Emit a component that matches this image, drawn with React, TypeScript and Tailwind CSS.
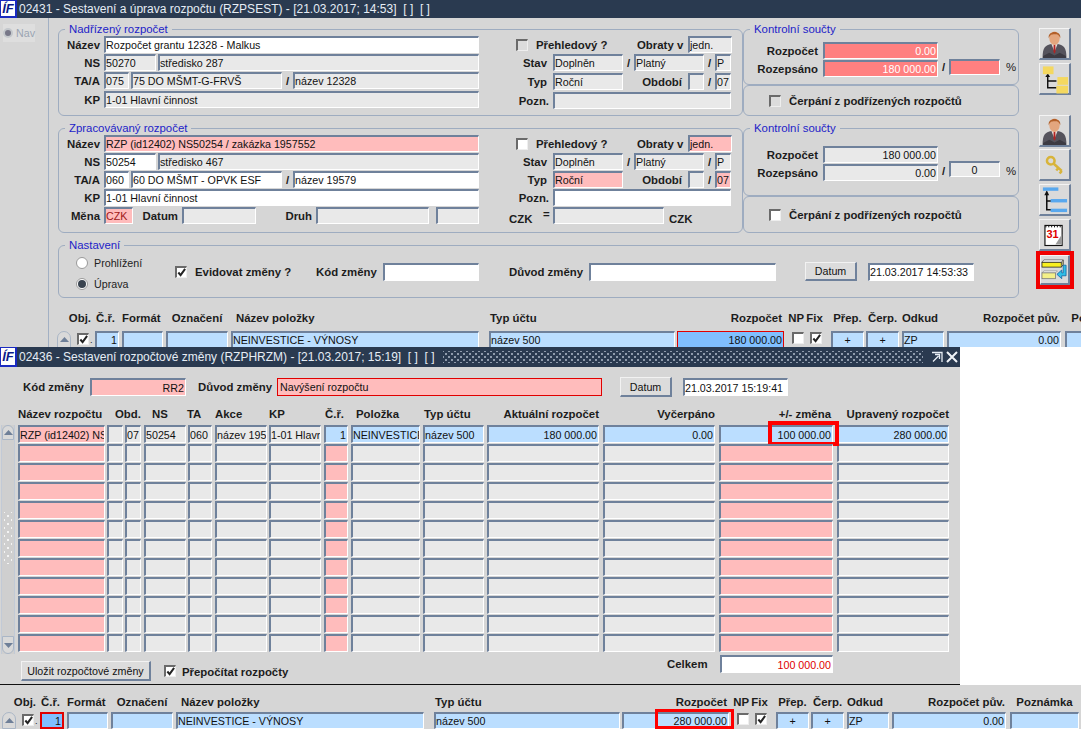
import React from "react";

const field = "shrink-0 flex items-center overflow-hidden whitespace-nowrap pl-0 pr-[1px] text-[10.7px] border-t-2 border-l-2 border-r border-b border-t-[#6f819b] border-l-[#6f819b] border-r-white border-b-white";
const GRAY = "bg-[#e9e9e9]";
const WHITE = "bg-white";
const PINK = "bg-[#ffbcbc]";
const BLUE = "bg-[#bbdeff]";
const DBLUE = "bg-[#80bfff]";
const SALMON = "bg-[#ff8080]";
const RED = "shrink-0 flex items-center overflow-hidden whitespace-nowrap px-[1px] text-[10.7px] border border-[#e00000]";

function F({ c, t, children }: { c: string; t?: string; children?: React.ReactNode }) {
  return <div className={`${field} ${c}`}>{t}{children}</div>;
}
function L({ c, t }: { c: string; t: string }) {
  return <div className={`shrink-0 whitespace-nowrap font-bold text-[#1c1c1c] ${c}`}>{t}</div>;
}
function Slash({ c }: { c: string }) {
  return <div className={`shrink-0 text-center font-bold text-[#1c1c1c] ${c}`}>/</div>;
}
function Check({ on, white, c = "" }: { on?: boolean; white?: boolean; c?: string }) {
  return (
    <div className={`shrink-0 w-[12px] h-[12px] border-t-2 border-l-2 border-t-[#6a6a6a] border-l-[#6a6a6a] border-r border-b border-r-[#eee] border-b-[#eee] ${white ? "bg-white" : "bg-[#dcdcdc]"} ${c}`}>
      {on && (
        <svg viewBox="0 0 10 10" className="w-[9px] h-[9px]">
          <path d="M1.5 5 L4 8 L9 1" fill="none" stroke="#222" strokeWidth="2.2" />
        </svg>
      )}
    </div>
  );
}
function Radio({ on, c = "" }: { on?: boolean; c?: string }) {
  return (
    <div className={`shrink-0 w-[12px] h-[12px] rounded-full bg-white border border-[#9a9a9a] flex items-center justify-center ${c}`}>
      {on && <div className="w-[8px] h-[8px] rounded-full bg-[#3a4450]" />}
    </div>
  );
}
function Box({ title, c, children }: { title?: string; c: string; children?: React.ReactNode }) {
  return (
    <div className={`relative shrink-0 border border-[#9eacc0] rounded-[6px] ${c}`}>
      {title && <div className="absolute -top-[8px] left-[6px] px-[4px] bg-[#d6d6d6] text-[#2222c8] whitespace-nowrap leading-[14px]">{title}</div>}
      {children}
    </div>
  );
}
function Btn({ c, t }: { c: string; t: string }) {
  return (
    <div className={`shrink-0 flex items-center justify-center whitespace-nowrap text-[10.7px] bg-[#dcdcdc] border border-t-[#f2f2f2] border-l-[#f2f2f2] border-r-2 border-b-2 border-r-[#6f819b] border-b-[#6f819b] ${c}`}>
      {t}
    </div>
  );
}
function Arrow({ dir, c = "" }: { dir: "up" | "down"; c?: string }) {
  return (
    <div className={`shrink-0 flex items-center justify-center bg-[#d9d9d9] border border-[#aab6c6] ${dir === "up" ? "rounded-t-[8px]" : "rounded-b-[8px]"} ${c}`}>
      <svg viewBox="0 0 9 5" className="w-[9px] h-[5px]">
        <path d={dir === "up" ? "M0 5 L4.5 0 L9 5Z" : "M0 0 L4.5 5 L9 0Z"} fill="#6e7f98" />
      </svg>
    </div>
  );
}

function Person() {
  return (
    <svg viewBox="0 0 24 27" className="w-[25px] h-[28px]">
      <path d="M0.5 27 C0.5 17 3 14.5 9 13.5 L15 13.5 C21 14.5 23.5 17 23.5 27 Z" fill="#55535c" />
      <path d="M9 13.5 L12 21 L15 13.5 Z" fill="#e6e0dc" />
      <path d="M11.2 14 L12.8 14 L13 21 L12 23 L11 21 Z" fill="#b32222" />
      <ellipse cx="12" cy="8" rx="5" ry="6.5" fill="#e3a67e" />
      <path d="M6.5 8 C5 0 19 0 17.5 8 C16.5 4.5 15 4 12 4 C9 4 7.5 4.5 6.5 8Z" fill="#b2602a" />
      <path d="M1 25 L7 22 L12 24.5 L17 22 L23 25 L23 27 L1 27Z" fill="#3c3a42" />
    </svg>
  );
}
function YellowTree() {
  return (
    <svg viewBox="0 0 30 30" className="w-[30px] h-[30px]">
      <path d="M8 11 V24 H17 M8 17 H17" fill="none" stroke="#111" strokeWidth="1.5" />
      <path d="M8 9 L5.5 13 H10.5Z" fill="#111" />
      <rect x="3" y="2" width="11" height="8" fill="#f4d860" />
      <rect x="18" y="13" width="11" height="8" fill="#f4d860" />
      <rect x="17" y="22" width="12" height="8" fill="#f4d860" />
    </svg>
  );
}
function Key() {
  return (
    <svg viewBox="0 0 26 26" className="w-[22px] h-[22px]">
      <circle cx="8" cy="8" r="4.5" fill="none" stroke="#d8b43a" strokeWidth="3" />
      <path d="M11.5 11.5 L21 20 M17 16.5 L14.5 19.5 M21 20 L18.5 23" fill="none" stroke="#d8b43a" strokeWidth="3" />
    </svg>
  );
}
function BlueTree() {
  return (
    <svg viewBox="0 0 30 28" className="w-[30px] h-[28px]">
      <path d="M7 7 V24 H14 M7 15 H14" fill="none" stroke="#111" strokeWidth="1.6" />
      <path d="M7 4 L4.5 9 H9.5Z" fill="#111" />
      <rect x="3" y="1" width="16" height="3.5" fill="#58a8ee" />
      <rect x="11" y="13" width="17" height="3.5" fill="#58a8ee" />
      <rect x="11" y="23" width="17" height="3.5" fill="#58a8ee" />
    </svg>
  );
}
function Calendar() {
  return (
    <svg viewBox="0 0 22 24" className="w-[21px] h-[24px]">
      <rect x="1" y="2" width="18" height="21" fill="#fff" stroke="#111" strokeWidth="1.2" />
      <path d="M2 1.5 V4 M5 1.5 V4 M8 1.5 V4 M11 1.5 V4 M14 1.5 V4 M17 1.5 V4" stroke="#111" strokeWidth="1" />
      <text x="2.5" y="15.5" fontSize="11.5" fontWeight="700" fontFamily="Liberation Sans" fill="#e00000">31</text>
      <path d="M19 11 L12 22 L19 22Z" fill="#9a9a9a" />
    </svg>
  );
}
function Stack() {
  return (
    <svg viewBox="0 0 28 24" className="w-[28px] h-[24px]">
      <path d="M1 4 L3 1.5 H23 L21 4 Z" fill="#fff" stroke="#333" strokeWidth="0.6" />
      <rect x="1" y="4" width="20" height="5" fill="#f8f020" stroke="#222" strokeWidth="0.8" />
      <path d="M21 9 L23 6.5 V1.5" fill="#d8d070" stroke="#222" strokeWidth="0.8" />
      <path d="M1 15 L3 13 H17 L15 15 Z" fill="#fff" stroke="#777" strokeWidth="0.6" />
      <rect x="1" y="15" width="14" height="6" fill="#f4f088" stroke="#777" strokeWidth="0.8" />
      <path d="M23 7 H26 V18 H21.5 V21 L16.5 16.5 L21.5 12 V15 H23Z" fill="#30c0e8" stroke="#1060a0" strokeWidth="0.8" />
    </svg>
  );
}
function Tool({ children, c = "w-[32px] h-[32px]" }: { children: React.ReactNode; c?: string }) {
  return (
    <div className={`shrink-0 flex items-center justify-center bg-[#dadada] border border-t-[#f4f4f4] border-l-[#f4f4f4] border-r-2 border-b-2 border-r-[#6f819b] border-b-[#6f819b] ${c}`}>
      {children}
    </div>
  );
}
function Logo() {
  return (
    <div className="shrink-0 w-[17px] h-full bg-white border-r-2 border-b-2 border-t border-l border-[#1a2ac0] flex items-center justify-center overflow-hidden">
      <span className="font-bold italic text-[13px] leading-none text-[#0c1a8a]">ÍF</span>
    </div>
  );
}

function Parent() {
  return (
    <Box title="Nadřízený rozpočet" c="w-[685px] h-[87px] flex">
      <div className="w-[421px] pt-[6px] flex flex-col gap-[1px]">
        <div className="flex h-[17px] items-center"><L c="w-[41px] text-right mr-[4px]" t="Název" /><F c={`${WHITE} w-[375px] h-[17px]`} t="Rozpočet grantu 12328 - Malkus" /></div>
        <div className="flex h-[17px] items-center"><L c="w-[41px] text-right mr-[4px]" t="NS" /><F c={`${GRAY} w-[52px] h-[17px]`} t="50270" /><F c={`${GRAY} w-[321px] h-[17px] ml-[2px]`} t="středisko 287" /></div>
        <div className="flex h-[17px] items-center"><L c="w-[41px] text-right mr-[4px]" t="TA/A" /><F c={`${GRAY} w-[25px] h-[17px]`} t="075" /><F c={`${GRAY} w-[151px] h-[17px] ml-[2px]`} t="75 DO MŠMT-G-FRVŠ" /><Slash c="w-[11px]" /><F c={`${GRAY} w-[186px] h-[17px]`} t="název 12328" /></div>
        <div className="flex h-[17px] items-center mt-[1px]"><L c="w-[41px] text-right mr-[4px]" t="KP" /><F c={`${GRAY} w-[375px] h-[17px]`} t="1-01 Hlavní činnost" /></div>
      </div>
      <div className="pt-[6px] flex flex-col gap-[1px]">
        <div className="flex h-[17px] items-center"><Check c="ml-[36px]" /><L c="w-[109px] pl-[8px]" t="Přehledový ?" /><L c="w-[45px]" t="Obraty v" /><F c={`${GRAY} w-[44px] h-[17px] ml-[6px]`} t="jedn." /></div>
        <div className="flex h-[17px] items-center"><L c="w-[67px] text-right mr-[6px]" t="Stav" /><F c={`${GRAY} w-[70px] h-[17px]`} t="Doplněn" /><Slash c="w-[11px]" /><F c={`${GRAY} w-[70px] h-[17px]`} t="Platný" /><Slash c="w-[11px]" /><F c={`${GRAY} w-[16px] h-[17px]`} t="P" /></div>
        <div className="flex h-[17px] items-center mt-[1px]"><L c="w-[67px] text-right mr-[6px]" t="Typ" /><F c={`${GRAY} w-[70px] h-[17px]`} t="Roční" /><L c="w-[59px] text-right" t="Období" /><F c={`${GRAY} w-[16px] h-[17px] ml-[6px]`} /><Slash c="w-[11px]" /><F c={`${GRAY} w-[16px] h-[17px]`} t="07" /></div>
        <div className="flex h-[17px] items-center mt-[1px]"><L c="w-[69px] text-right mr-[4px]" t="Pozn." /><F c={`${GRAY} w-[178px] h-[17px]`} /></div>
      </div>
    </Box>
  );
}

function Edited() {
  return (
    <Box title="Zpracovávaný rozpočet" c="w-[685px] h-[105px] flex">
      <div className="w-[421px] pt-[6px] flex flex-col gap-[1px]">
        <div className="flex h-[17px] items-center"><L c="w-[41px] text-right mr-[4px]" t="Název" /><F c={`${PINK} w-[375px] h-[17px]`} t="RZP (id12402) NS50254 / zakázka 1957552" /></div>
        <div className="flex h-[17px] items-center"><L c="w-[41px] text-right mr-[4px]" t="NS" /><F c={`${WHITE} w-[52px] h-[17px]`} t="50254" /><F c={`${GRAY} w-[321px] h-[17px] ml-[2px]`} t="středisko 467" /></div>
        <div className="flex h-[17px] items-center"><L c="w-[41px] text-right mr-[4px]" t="TA/A" /><F c={`${WHITE} w-[25px] h-[17px]`} t="060" /><F c={`${WHITE} w-[151px] h-[17px] ml-[2px]`} t="60 DO MŠMT - OPVK ESF" /><Slash c="w-[11px]" /><F c={`${WHITE} w-[186px] h-[17px]`} t="název 19579" /></div>
        <div className="flex h-[17px] items-center"><L c="w-[41px] text-right mr-[4px]" t="KP" /><F c={`${WHITE} w-[375px] h-[17px]`} t="1-01 Hlavní činnost" /></div>
        <div className="flex h-[17px] items-center"><L c="w-[41px] text-right mr-[4px]" t="Měna" /><F c={`${PINK} w-[29px] h-[17px] text-[#a01818]`} t="CZK" /><L c="w-[45px] text-right" t="Datum" /><F c={`${GRAY} w-[74px] h-[17px] ml-[4px]`} /><L c="w-[56px] text-right" t="Druh" /><F c={`${GRAY} w-[113px] h-[17px] ml-[4px]`} /><F c={`${GRAY} w-[43px] h-[17px] ml-[7px]`} /></div>
      </div>
      <div className="pt-[6px] flex flex-col gap-[1px]">
        <div className="flex h-[17px] items-center"><Check white c="ml-[36px]" /><L c="w-[109px] pl-[8px]" t="Přehledový ?" /><L c="w-[45px]" t="Obraty v" /><F c={`${PINK} w-[44px] h-[17px] ml-[6px]`} t="jedn." /></div>
        <div className="flex h-[17px] items-center"><L c="w-[67px] text-right mr-[6px]" t="Stav" /><F c={`${GRAY} w-[70px] h-[17px]`} t="Doplněn" /><Slash c="w-[11px]" /><F c={`${GRAY} w-[70px] h-[17px]`} t="Platný" /><Slash c="w-[11px]" /><F c={`${GRAY} w-[16px] h-[17px]`} t="P" /></div>
        <div className="flex h-[17px] items-center"><L c="w-[67px] text-right mr-[6px]" t="Typ" /><F c={`${PINK} w-[70px] h-[17px]`} t="Roční" /><L c="w-[59px] text-right" t="Období" /><F c={`${GRAY} w-[16px] h-[17px] ml-[6px]`} /><Slash c="w-[11px]" /><F c={`${PINK} w-[16px] h-[17px]`} t="07" /></div>
        <div className="flex h-[17px] items-center"><L c="w-[69px] text-right mr-[4px]" t="Pozn." /><F c={`${WHITE} w-[178px] h-[17px]`} /></div>
        <div className="flex h-[17px] items-center"><L c="w-[22px] ml-[29px] pt-[7px]" t="CZK" /><L c="w-[22px] pl-[12px] -mt-[3px]" t="=" /><F c={`${GRAY} w-[111px] h-[17px]`} /><L c="ml-[5px] pt-[7px]" t="CZK" /></div>
      </div>
    </Box>
  );
}

function Totals({ variant }: { variant: "a" | "b" }) {
  const a = variant === "a";
  return (
    <Box title="Kontrolní součty" c={a ? "w-[276px] h-[56px]" : "w-[276px] h-[68px]"}>
      <div className={`flex flex-col gap-[1px] ${a ? "pt-[12px]" : "pt-[17px]"}`}>
        <div className="flex h-[17px] items-center"><L c="w-[74px] text-right mr-[5px]" t="Rozpočet" /><F c={`${a ? SALMON + " text-white" : GRAY} w-[115px] h-[17px] justify-end`} t={a ? "0.00" : "180 000.00"} /></div>
        <div className="flex h-[17px] items-start">
          <L c="w-[74px] text-right mr-[5px] pt-[2px]" t="Rozepsáno" />
          <F c={`${a ? SALMON + " text-white" : GRAY} w-[115px] h-[17px] justify-end`} t={a ? "180 000.00" : "0.00"} />
          <Slash c="w-[11px]" />
          <F c={`${a ? SALMON + " -mt-[1px]" : GRAY + " -mt-[3px]"} w-[51px] h-[16px] justify-center`} t={a ? "" : "0"} />
          <L c="ml-[6px] font-normal" t="%" />
        </div>
      </div>
    </Box>
  );
}

function Draw({ h, white }: { h: string; white?: boolean }) {
  return (
    <Box c={`w-[276px] ${h} flex items-center pl-[25px]`}>
      <Check white={white} /><L c="ml-[8px]" t="Čerpání z podřízených rozpočtů" />
    </Box>
  );
}

function Nastaveni() {
  return (
    <Box title="Nastavení" c="w-[961px] h-[53px] flex items-center">
      <div className="w-[116px] pl-[17px] flex flex-col gap-[9px] pt-[3px] text-[10.7px] text-[#222]">
        <div className="flex items-center h-[12px]"><Radio /><span className="ml-[6px]">Prohlížení</span></div>
        <div className="flex items-center h-[12px]"><Radio on /><span className="ml-[6px]">Úprava</span></div>
      </div>
      <Check on white />
      <L c="w-[129px] pl-[8px]" t="Evidovat změny ?" />
      <L c="w-[61px]" t="Kód změny" />
      <F c={`${WHITE} w-[96px] h-[18px] ml-[6px]`} />
      <L c="w-[74px] ml-[30px]" t="Důvod změny" />
      <F c={`${WHITE} w-[187px] h-[18px] ml-[6px]`} />
      <Btn c="w-[52px] h-[19px] ml-[29px]" t="Datum" />
      <F c={`${WHITE} w-[106px] h-[18px] ml-[11px]`} t="21.03.2017 14:53:33" />
    </Box>
  );
}

function Header() {
  return (
    <div className="flex h-[14px] items-center font-bold text-[#1c1c1c] whitespace-nowrap">
      <div className="shrink-0 w-[38px] pr-[4px] text-right">Obj.</div>
      <div className="shrink-0 w-[24px] pl-[1px] mr-[3px]">Č.ř.</div>
      <div className="shrink-0 w-[41px] mr-[3px]">Formát</div>
      <div className="shrink-0 w-[62px] mr-[3px] text-center">Označení</div>
      <div className="shrink-0 w-[248px] pl-[5px] mr-[10px]">Název položky</div>
      <div className="shrink-0 w-[186px] pl-[1px] mr-[2px]">Typ účtu</div>
      <div className="shrink-0 w-[107px] pr-[2px] text-right">Rozpočet</div>
      <div className="shrink-0 w-[20px] text-right">NP</div>
      <div className="shrink-0 w-[21px] text-center mr-[6px]">Fix</div>
      <div className="shrink-0 w-[33px] mr-[2px] text-center">Přep.</div>
      <div className="shrink-0 w-[33px] mr-[3px] text-center">Čerp.</div>
      <div className="shrink-0 w-[42px] mr-[3px]">Odkud</div>
      <div className="shrink-0 w-[114px] pr-[1px] mr-[4px] text-right">Rozpočet pův.</div>
      <div className="shrink-0 w-[69px] text-center">Poznámka</div>
    </div>
  );
}

function ItemRow({ bottom }: { bottom: boolean }) {
  return (
    <div className="flex h-[17px] items-start">
      <Arrow dir="up" c="w-[14px] h-[17px]" />
      <Check on white c="ml-[6px] mt-[2px]" />
      <div className="w-[6px] shrink-0 text-[9px] leading-[18px] pl-[1px]">.</div>
      {bottom ? (
        <div className={`${RED} border-2 ${DBLUE} w-[24px] h-[17px] justify-end`}>1</div>
      ) : (
        <F c={`${BLUE} w-[24px] h-[17px] justify-end`} t="1" />
      )}
      <F c={`${BLUE} w-[41px] h-[17px] ml-[3px]`} />
      <F c={`${BLUE} w-[62px] h-[17px] ml-[3px]`} />
      <F c={`${BLUE} w-[248px] h-[17px] ml-[3px]`} t="NEINVESTICE - VÝNOSY" />
      <F c={`${BLUE} w-[186px] h-[17px] ml-[10px]`} t="název 500" />
      {bottom ? (
        <div className="relative shrink-0 ml-[2px] w-[107px] h-[17px]">
          <F c={`${BLUE} w-[107px] h-[17px] justify-end`} t="280 000.00" />
          <div className="absolute -right-[5px] -top-[3px] w-[79px] h-[20px] border-[3px] border-[#ff0000]" />
        </div>
      ) : (
        <div className={`${RED} ${DBLUE} w-[107px] h-[17px] ml-[2px] justify-end`}>180 000.00</div>
      )}
      <Check white c="ml-[8px] mt-[1px]" />
      <Check on white c="ml-[6px] mt-[1px]" />
      <F c={`${BLUE} w-[33px] h-[17px] ml-[9px] justify-center`} t="+" />
      <F c={`${BLUE} w-[33px] h-[17px] ml-[2px] justify-center`} t="+" />
      <F c={`${BLUE} w-[42px] h-[17px] ml-[3px]`} t="ZP" />
      <F c={`${BLUE} w-[114px] h-[17px] ml-[3px] justify-end`} t="0.00" />
      <F c={`${BLUE} w-[69px] h-[17px] ml-[4px]`} />
    </div>
  );
}

function TopWindow() {
  return (
    <div className="h-[347px] overflow-hidden flex flex-col shrink-0">
      <div className="h-[18px] bg-[#2a3a50] flex text-[#e6edf5] text-[12px] shrink-0">
        <Logo />
        <div className="ml-[2px] leading-[18px] whitespace-nowrap">02431 - Sestavení a úprava rozpočtu (RZPSEST) - [21.03.2017; 14:53]&nbsp; [ ]&nbsp; [ ]</div>
      </div>
      <div className="flex flex-1 min-h-0">
        <div className="w-[49px] shrink-0 border-r border-[#a2b0c4] pt-[6px] pl-[3px]">
          <div className="w-[32px] h-[18px] bg-[#dedede] flex items-center text-[#9aa4b2] text-[10.7px]">
            <div className="w-[10px] h-[10px] rounded-full bg-[#778] border-2 border-[#c4c8cc] mr-[3px]" />Nav
          </div>
        </div>
        <div className="flex-1 min-w-0 flex flex-col">
          <div className="flex pl-[9px] pt-[10px]">
            <div className="w-[961px] shrink-0 pt-[1px] flex flex-col">
              <div className="flex"><Parent /><div className="flex flex-col"><Totals variant="a" /><Draw h="h-[31px]" /></div></div>
              <div className="flex mt-[12px]"><Edited /><div className="flex flex-col"><Totals variant="b" /><Draw h="h-[37px]" white /></div></div>
              <div className="mt-[12px]"><Nastaveni /></div>
            </div>
            <div className="ml-[20px] w-[32px] flex flex-col shrink-0">
              <Tool><Person /></Tool>
              <Tool c="w-[32px] h-[32px] mt-[3px]"><YellowTree /></Tool>
              <Tool c="w-[32px] h-[32px] mt-[20px]"><Person /></Tool>
              <Tool c="w-[32px] h-[32px] mt-[2px]"><Key /></Tool>
              <Tool c="w-[32px] h-[32px] mt-[3px]"><BlueTree /></Tool>
              <Tool c="w-[32px] h-[32px] mt-[3px]"><Calendar /></Tool>
              <Tool c="w-[30px] h-[30px] ml-[1px] mt-[4px] outline-[4px] outline-[#f00000]"><Stack /></Tool>
            </div>
          </div>
          <div className="pl-[8px] pt-[13px] flex flex-col gap-[6px]">
            <Header />
            <ItemRow bottom={false} />
          </div>
        </div>
      </div>
    </div>
  );
}

function ModalRow({ first }: { first: boolean }) {
  return (
    <div className="flex h-[18px]">
      <F c={`${PINK} w-[87px] h-[18px]`} t={first ? "RZP (id12402) NS50254" : ""} />
      <F c={`${GRAY} w-[16px] h-[18px] ml-[2px]`} />
      <F c={`${GRAY} w-[16px] h-[18px] ml-[2px]`} t={first ? "07" : ""} />
      <F c={`${GRAY} w-[42px] h-[18px] ml-[3px]`} t={first ? "50254" : ""} />
      <F c={`${GRAY} w-[24px] h-[18px] ml-[2px]`} t={first ? "060" : ""} />
      <F c={`${GRAY} w-[52px] h-[18px] ml-[3px]`} t={first ? "název 19579" : ""} />
      <F c={`${GRAY} w-[52px] h-[18px] ml-[2px]`} t={first ? "1-01 Hlavní činnost" : ""} />
      <F c={`${first ? BLUE : PINK} w-[24px] h-[18px] ml-[3px] justify-end`} t={first ? "1" : ""} />
      <F c={`${first ? BLUE : GRAY} w-[69px] h-[18px] ml-[3px]`} t={first ? "NEINVESTICE" : ""} />
      <F c={`${first ? BLUE : GRAY} w-[61px] h-[18px] ml-[3px]`} t={first ? "název 500" : ""} />
      <F c={`${first ? BLUE : GRAY} w-[112px] h-[18px] ml-[3px] justify-end`} t={first ? "180 000.00" : ""} />
      <F c={`${first ? BLUE : GRAY} w-[112px] h-[18px] ml-[4px] justify-end`} t={first ? "0.00" : ""} />
      <div className="relative ml-[4px] w-[114px] h-[18px] shrink-0">
        <F c={`${first ? BLUE : PINK} w-[114px] h-[18px] justify-end`} t={first ? "100 000.00" : ""} />
        {first && <div className="absolute -right-[6px] -top-[4px] w-[71px] h-[25px] border-[4px] border-[#ff0000]" />}
      </div>
      <F c={`${first ? BLUE : GRAY} w-[112px] h-[18px] ml-[4px] justify-end`} t={first ? "280 000.00" : ""} />
    </div>
  );
}

function Modal() {
  const rows = Array.from({ length: 12 }, (_, i) => i);
  return (
    <div className="h-[338px] w-full flex shrink-0 bg-white">
      <div className="w-[960px] h-[338px] shrink-0 bg-[#d6d6d6] border-b border-[#111] flex flex-col">
        <div className="h-[20px] bg-[#2a3a50] flex text-[#e6edf5] text-[12px] shrink-0 items-stretch">
          <Logo />
          <div className="ml-[2px] leading-[20px] whitespace-nowrap">02436 - Sestavení rozpočtové změny (RZPHRZM) - [21.03.2017; 15:19]&nbsp; [ ]&nbsp; [ ]</div>
          <div className="flex-1 mx-[8px] my-[4px] bg-[radial-gradient(circle,#8f9bac_1px,transparent_1.2px),radial-gradient(circle,#8f9bac_1px,transparent_1.2px)] bg-[length:6px_6px] bg-[position:0_0,3px_3px]" />
          <svg viewBox="0 0 12 12" className="w-[12px] h-[12px] mt-[4px] mr-[3px] shrink-0">
            <path d="M1 1.5 H11 V11 M2 10.5 L7.5 5 M4 3.5 H8.5 V8" fill="none" stroke="#e8eef5" strokeWidth="1.3" />
          </svg>
          <svg viewBox="0 0 12 12" className="w-[12px] h-[12px] mt-[4px] mr-[2px] shrink-0">
            <path d="M1 1 L11 11 M11 1 L1 11" stroke="#f0f4f8" strokeWidth="2" />
          </svg>
        </div>
        <div className="flex items-center h-[20px] mt-[10px]">
          <L c="ml-[23px] w-[61px]" t="Kód změny" />
          <F c={`${PINK} w-[96px] h-[18px] ml-[6px] justify-end`} t="RR2" />
          <L c="ml-[12px] w-[74px]" t="Důvod změny" />
          <div className={`${RED} ${PINK} w-[325px] h-[18px] ml-[5px] pl-[2px]`}>Navýšení rozpočtu</div>
          <Btn c="w-[52px] h-[20px] ml-[18px]" t="Datum" />
          <F c={`${WHITE} w-[105px] h-[18px] ml-[11px]`} t="21.03.2017 15:19:41" />
        </div>
        <div className="flex h-[14px] mt-[10px] items-center font-bold text-[#1c1c1c] whitespace-nowrap">
          <div className="shrink-0 w-[18px]" />
          <div className="shrink-0 w-[89px]">Název rozpočtu</div>
          <div className="shrink-0 w-[45px] pl-[8px]">Obd.</div>
          <div className="shrink-0 w-[35px]">NS</div>
          <div className="shrink-0 w-[28px]">TA</div>
          <div className="shrink-0 w-[54px]">Akce</div>
          <div className="shrink-0 w-[56px]">KP</div>
          <div className="shrink-0 w-[31px]">Č.ř.</div>
          <div className="shrink-0 w-[68px]">Položka</div>
          <div className="shrink-0 w-[63px]">Typ účtu</div>
          <div className="shrink-0 w-[112px] text-right">Aktuální rozpočet</div>
          <div className="shrink-0 w-[116px] text-right">Vyčerpáno</div>
          <div className="shrink-0 w-[116px] text-right">+/- změna</div>
          <div className="shrink-0 w-[118px] text-right">Upravený rozpočet</div>
        </div>
        <div className="flex mt-[4px]">
          <div className="w-[14px] ml-[1px] mr-[3px] h-[229px] flex flex-col shrink-0 bg-[#cfcfcf] border-x border-[#c2cad6]">
            <Arrow dir="up" c="w-[12px] h-[15px]" />
            <div className="flex-1 flex items-center justify-center">
              <div className="w-[8px] h-[52px] bg-[radial-gradient(circle,#f4f4f4_1px,transparent_1.2px),radial-gradient(circle,#f4f4f4_1px,transparent_1.2px)] bg-[length:8px_8px] bg-[position:0_0,4px_4px]" />
            </div>
            <Arrow dir="down" c="w-[12px] h-[18px]" />
          </div>
          <div className="flex flex-col gap-[1px]">
            {rows.map((i) => <ModalRow key={i} first={i === 0} />)}
          </div>
        </div>
        <div className="flex">
          <Btn c="ml-[21px] mt-[7px] w-[130px] h-[20px]" t="Uložit rozpočtové změny" />
          <Check on white c="ml-[13px] mt-[11px]" />
          <L c="ml-[6px] mt-[11px] w-[485px]" t="Přepočítat rozpočty" />
          <L c="w-[43px] mt-[3px]" t="Celkem" />
          <F c={`${WHITE} w-[113px] h-[18px] ml-[10px] mt-[1px] justify-end text-[#e00000]`} t="100 000.00" />
        </div>
      </div>
      <div className="flex-1" />
    </div>
  );
}

function BottomWindow() {
  return (
    <div className="h-[44px] overflow-hidden pl-[2px] pt-[10px] flex flex-col gap-[3px]">
      <Header />
      <ItemRow bottom />
    </div>
  );
}

export default function App() {
  return (
    <div className="w-[1081px] h-[729px] overflow-hidden flex flex-col bg-[#d6d6d6] font-['Liberation_Sans',sans-serif] text-[11.4px] leading-[14px] text-[#111]">
      <TopWindow />
      <Modal />
      <BottomWindow />
    </div>
  );
}
